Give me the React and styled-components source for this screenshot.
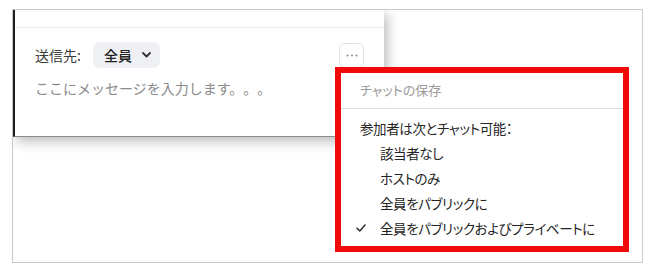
import styled, { createGlobalStyle } from "styled-components"

const GlobalStyle = createGlobalStyle`
  html, body {
    margin: 0;
    padding: 0;
    background: #ffffff;
  }
  body {
    font-family: "Noto Sans CJK JP", "Noto Sans", sans-serif;
    text-spacing-trim: space-all;
  }
`

const Page = styled.div`
  width: 659px;
  height: 272px;
  box-sizing: border-box;
  padding: 9px 16px 9px 12px;
`

const Frame = styled.div`
  position: relative;
  height: 254px;
  box-sizing: border-box;
  border: 1px solid #c9c9c9;
  overflow: hidden;
`

const ChatPanel = styled.div`
  width: 371px;
  height: 127px;
  box-sizing: border-box;
  border-left: 2px solid #1e1e1e;
  border-bottom: 1px solid #8c8c8c;
  background: #ffffff;
  box-shadow: 3px 4px 12px rgba(0, 0, 0, 0.28);
`

const PanelHeader = styled.div`
  height: 17px;
  border-bottom: 1px solid #ececec;
`

const Compose = styled.div`
  padding: 14px 20px 0 20px;
`

const ToRow = styled.div`
  display: flex;
  align-items: center;
  height: 26px;
`

const ToLabel = styled.span`
  font-size: 14px;
  color: #3a3a3a;
`

const Pill = styled.button`
  display: flex;
  align-items: center;
  gap: 10px;
  height: 26px;
  margin-left: 12px;
  padding: 0 9px 0 11px;
  border: none;
  border-radius: 7px;
  background: #eff0f4;
  font-family: inherit;
  font-size: 14px;
  font-weight: 500;
  color: #222;
`

const MoreButton = styled.button`
  display: flex;
  align-items: center;
  justify-content: center;
  margin-left: auto;
  width: 25px;
  height: 25px;
  padding: 0;
  border: 1px solid #e2e2e2;
  border-radius: 6px;
  background: #ffffff;
  color: #777;
`

const Placeholder = styled.div`
  margin-top: 10px;
  font-size: 14px;
  line-height: 20px;
  color: #8a8a8a;
  white-space: nowrap;
`

const Menu = styled.div`
  position: absolute;
  left: 322px;
  top: 57px;
  width: 294px;
  height: 185px;
  box-sizing: border-box;
  border: 6px solid #f00a0a;
  background: #ffffff;
  font-feature-settings: "palt";
`

const MenuTitle = styled.div`
  padding: 7px 19px 8px;
  line-height: 20px;
  font-size: 13px;
  color: #9a9a9a;
  border-bottom: 1px solid #dedede;
`

const MenuList = styled.div`
  padding: 6px 19px 0;
`

const MenuRow = styled.div`
  display: flex;
  align-items: center;
  height: 25px;
  padding-left: ${p => (p.$indent ? "20px" : "0")};
  font-size: 13.5px;
  letter-spacing: -0.4px;
  white-space: nowrap;
  color: #242424;
`

const Check = styled.span`
  display: flex;
  align-items: center;
  width: 24px;
  margin-left: -24px;
`

const Chevron = () => (
  <svg width="9" height="6" viewBox="0 0 9 6">
    <path d="M1 1 L4.5 4.5 L8 1" fill="none" stroke="#333" strokeWidth="1.8" strokeLinecap="round" strokeLinejoin="round" />
  </svg>
)

const Dots = () => (
  <svg width="12" height="3" viewBox="0 0 12 3">
    <circle cx="1.5" cy="1.5" r="1" fill="#8a8a8a" />
    <circle cx="6" cy="1.5" r="1" fill="#8a8a8a" />
    <circle cx="10.5" cy="1.5" r="1" fill="#8a8a8a" />
  </svg>
)

const CheckMark = () => (
  <svg width="10" height="8" viewBox="0 0 10 8">
    <path d="M1 4.2 L3.8 7 L9 1" fill="none" stroke="#333" strokeWidth="1.6" strokeLinecap="round" strokeLinejoin="round" />
  </svg>
)

const options = [
  { label: "該当者なし" },
  { label: "ホストのみ" },
  { label: "全員をパブリックに" },
  { label: "全員をパブリックおよびプライベートに", checked: true },
]

export default function App() {
  return (
    <Page>
      <GlobalStyle />
      <Frame>
        <ChatPanel>
          <PanelHeader />
          <Compose>
            <ToRow>
              <ToLabel>送信先:</ToLabel>
              <Pill>
                全員
                <Chevron />
              </Pill>
              <MoreButton>
                <Dots />
              </MoreButton>
            </ToRow>
            <Placeholder>ここにメッセージを入力します。。。</Placeholder>
          </Compose>
        </ChatPanel>
        <Menu>
          <MenuTitle>チャットの保存</MenuTitle>
          <MenuList>
            <MenuRow>参加者は次とチャット可能：</MenuRow>
            {options.map(o => (
              <MenuRow key={o.label} $indent>
                {o.checked && (
                  <Check>
                    <CheckMark />
                  </Check>
                )}
                {o.label}
              </MenuRow>
            ))}
          </MenuList>
        </Menu>
      </Frame>
    </Page>
  )
}
